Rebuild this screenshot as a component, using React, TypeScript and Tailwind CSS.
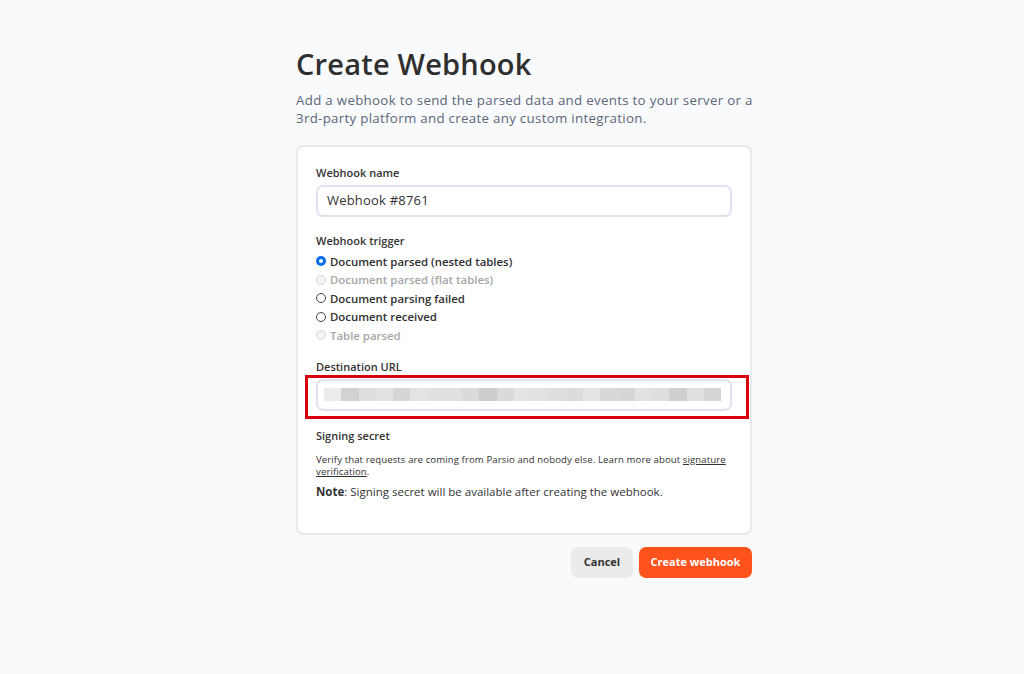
import React from 'react';

const blur = [
  '#ececec', '#d2d2d2', '#dedede', '#e2e2e2', '#d6d6d6', '#e3e3e3', '#e0e0e0', '#dfe0e2',
  '#dadada', '#cdcdcc', '#dadada', '#e3e4e6', '#e2e2e2', '#dedede', '#dcdcdc', '#e4e4e4',
  '#d8d8d8', '#d6d6d6', '#e1e2e4', '#dedede', '#cfcfcf', '#e0e0df', '#d4d4d4',
];

const triggers = [
  { label: 'Document parsed (nested tables)', checked: true, disabled: false },
  { label: 'Document parsed (flat tables)', checked: false, disabled: true },
  { label: 'Document parsing failed', checked: false, disabled: false },
  { label: 'Document received', checked: false, disabled: false },
  { label: 'Table parsed', checked: false, disabled: true },
];

const Radio: React.FC<{ checked: boolean; disabled: boolean }> = ({ checked, disabled }) => {
  if (checked) {
    return (
      <span className="flex items-center justify-center w-[10px] h-[10px] rounded-full bg-[#0b6cf0]">
        <span className="w-[4px] h-[4px] rounded-full bg-white" />
      </span>
    );
  }
  return (
    <span
      className={
        disabled
          ? 'w-[10px] h-[10px] rounded-full border border-[#d6d6d6] bg-[#f4f4f4]'
          : 'w-[10px] h-[10px] rounded-full border border-[#444]'
      }
    />
  );
};

export default function App() {
  return (
    <div
      className="min-h-[674px] w-full bg-[#f9fafc] text-[#333]"
      style={{ fontFamily: '"Open Sans", "Liberation Sans", sans-serif' }}
    >
      <div className="w-[456px] pt-[44px] ml-[296px]">
        <h1 className="text-[29px] leading-[40px] font-semibold text-[#2f2f2f] tracking-[0.2px]">Create Webhook</h1>
        <p className="mt-[7px] w-[480px] text-[13.3px] leading-[18px] text-[#5c6779] tracking-[0.3px]">
          Add a webhook to send the parsed data and events to your server or a
          <br />
          3rd-party platform and create any custom integration.
        </p>

        <div className="mt-[18px] rounded-[7px] border-2 border-[#e8e9eb] bg-white px-[18px] pt-[18px] pb-[33px]">
          <label className="block text-[11px] leading-[16px] font-semibold text-[#333]">Webhook name</label>
          <div className="mt-[4px] h-[32px] rounded-[7px] border-2 border-[#dde3ee] flex items-center px-[9px] text-[13px] text-[#333] tracking-[0.2px]">
            Webhook #8761
          </div>

          <label className="block mt-[16px] text-[11px] leading-[16px] font-semibold text-[#333]">Webhook trigger</label>
          <div className="mt-[3px] flex flex-col">
            {triggers.map((t) => (
              <div key={t.label} className="flex items-center gap-[4px] h-[18.5px]">
                <Radio checked={t.checked} disabled={t.disabled} />
                <span
                  className={
                    t.disabled
                      ? 'text-[11.4px] font-semibold text-[#a6a6a6]'
                      : 'text-[11.4px] font-semibold text-[#2f2f2f]'
                  }
                >
                  {t.label}
                </span>
              </div>
            ))}
          </div>

          <label className="block mt-[14px] text-[11px] leading-[16px] font-semibold text-[#333]">Destination URL</label>
          <div className="relative mt-[4px]">
            <div className="h-[32px] rounded-[7px] border-2 border-[#dde3ee] flex items-center px-[6px]">
              <div className="flex h-[13px] w-[397px]">
                {blur.map((c, i) => (
                  <div key={i} className="h-full flex-1" style={{ backgroundColor: c }} />
                ))}
              </div>
            </div>
            <div className="pointer-events-none absolute -left-[11px] -right-[17px] -top-[4px] -bottom-[8px] border-[3px] border-[#d9000d]" />
          </div>

          <label className="block mt-[17px] text-[11px] leading-[16px] font-semibold text-[#333]">Signing secret</label>
          <p className="mt-[10px] text-[9.6px] leading-[12.5px] text-[#333] tracking-[0.1px]">
            Verify that requests are coming from Parsio and nobody else. Learn more about{' '}
            <a className="underline">signature verification</a>.
          </p>
          <p className="mt-[5px] text-[11.5px] leading-[16px] text-[#333]">
            <span className="font-bold">Note</span>: Signing secret will be available after creating the webhook.
          </p>
        </div>

        <div className="mt-[12px] flex justify-end gap-[6px]">
          <button className="h-[31px] w-[62px] rounded-[7px] bg-[#ebebeb] text-[11px] font-bold text-[#333]">Cancel</button>
          <button className="h-[31px] w-[113px] rounded-[7px] bg-[#ff521c] text-[11px] font-bold text-white">Create webhook</button>
        </div>
      </div>
    </div>
  );
}
